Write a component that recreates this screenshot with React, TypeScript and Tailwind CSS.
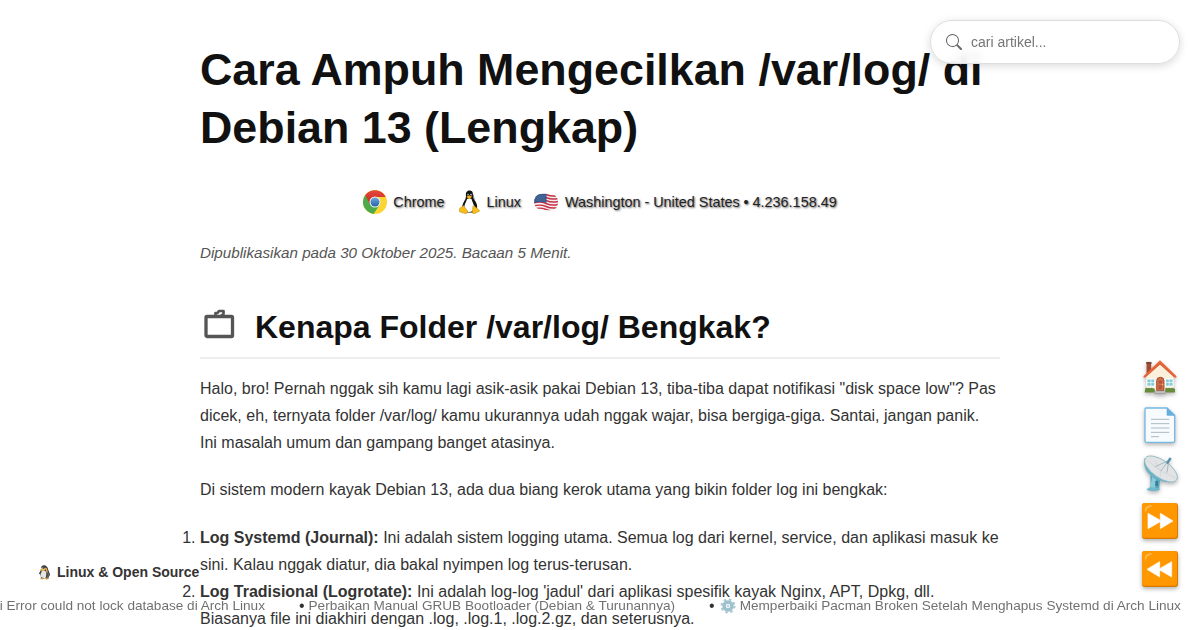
import React from "react";

function ChromeIcon() {
  return (
    <svg viewBox="0 0 48 48" className="size-6 shrink-0">
      <defs>
        <linearGradient id="cr" x2="0" y2="1"><stop stopColor="#e5483c" /><stop offset="1" stopColor="#c9281f" /></linearGradient>
        <linearGradient id="cb" x2="0" y2="1"><stop stopColor="#6fa8dc" /><stop offset="1" stopColor="#2463a8" /></linearGradient>
      </defs>
      <circle cx="24" cy="24" r="24" fill="#fcd532" />
      <path d="M24 24 4.500 10A24 24 0 0 0 21 47.800L33.500 29.500Z" fill="#4caa48" />
      <path d="M24 24 14.500 29.500 4.500 10A24 24 0 0 1 45.500 14H24Z" fill="url(#cr)" />
      <circle cx="24" cy="24" r="11" fill="#f4f4f4" />
      <circle cx="24" cy="24" r="9" fill="url(#cb)" />
    </svg>
  );
}

function TuxIcon() {
  return (
    <svg viewBox="0 0 44 50" className="h-6 w-[21px] shrink-0">
      <path d="M22 1c-6 0-8 5-7.500 10 .5 6-1 8-4 13-3 5-5 12-3 17l8 6h15l7-7c2-7-1-14-5-19-3-4-3-6-3-11C29.500 4 27 1 22 1Z" fill="#111" />
      <path d="M17 18c-1 5-6 11-6 18 0 5 5 10 10 10 6 0 10-3 11-9 0-8-5-13-6-19Z" fill="#fff" />
      <ellipse cx="19" cy="10" rx="1.500" ry="2.200" fill="#ddd" /><ellipse cx="25" cy="10" rx="1.700" ry="2.300" fill="#ddd" />
      <circle cx="19.300" cy="11" r="1.200" /><circle cx="24.500" cy="11" r="1.300" />
      <path d="m15.500 14 6-3 6 3-6 5Z" fill="#f7b718" />
      <path d="m9 32 9 12c1 4-2 6-6 5L2 46c-3-1-1-4-1-7 1-3 5-1 8-7ZM33 33c1 5 5 3 6 6l4 4c1 3-6 3-9 6-4 2-7 0-6-5 1-4 0-9 2-11Z" fill="#f8bd18" stroke="#a96e0c" strokeWidth=".8" />
      <path d="M28 7c3 4 1 8 5 13" fill="none" stroke="#555" strokeWidth="1.500" />
    </svg>
  );
}

function FlagIcon() {
  return (
    <svg viewBox="0 0 48 40" className="mt-[-1px] h-5 w-6 shrink-0">
      <defs><clipPath id="flag"><path d="M1 15Q4 4 14 4c10-1 14 0 22 1 7 0 10 5 12 11 1 7-1 13-5 17-7 5-15 4-22 3-8-1-14-1-18-7-3-5-3-9-2-14Z" /></clipPath></defs>
      <g clipPath="url(#flag)">
        <path d="M0 0h48v40H0Z" fill="#f6eff0" />
        <path d="M0 4q12-4 24 1t24 2M0 10q12-4 24 1t24 2M0 16q12-4 24 1t24 2M0 22q12-4 24 1t24 2M0 28q12-4 24 1t24 2M0 34q12-4 24 1t24 2" fill="none" stroke="#c63045" strokeWidth="2.900" />
        <path d="M0 0h25v22Q13 18 0 22Z" fill="#35588d" />
        <path d="M5 8h18M3 12h20M5 16h18" stroke="#a9bcd8" strokeWidth="1.200" strokeDasharray="1.500 2.500" />
      </g>
    </svg>
  );
}

function HomeIcon() {
  return (
    <svg viewBox="-1 -1 110 110" className="size-9">
      <path d="M13 10h14v35H13Z" fill="#a44b34" /><path d="M12 8h16v6H12Z" fill="#7c4436" />
      <path d="M12 50 54 12l41 38v45H12Z" fill="#fbf0dc" />
      <path d="M54 3 103 50c4 5 0 8-5 5L54 16 9 55c-5 3-8-1-4-5Z" fill="#e96435" /><path d="m9 55 45-40 44 40" fill="none" stroke="#b94c2d" strokeWidth="1.500" />
      <path d="M14 60h24v22H14ZM71 60h23v22H71Z" fill="#85cbd6" stroke="#fff" strokeWidth="3" /><path d="M26 60v22M14 71h24M82 60v22M71 71h23" stroke="#fff" strokeWidth="2" />
      <path d="M44 95V65q0-10 11-10t11 10v30Z" fill="#cf704d" stroke="#a8472f" strokeWidth="3" /><path d="M50 65h10v9H50ZM50 79h10v12H50Z" fill="#b55439" /><circle cx="62" cy="77" r="2" fill="#f8d052" />
      <path d="M9 89q3-3 7-1 4-3 8 0 4-3 9 0l5 2v11H7ZM70 89q3-3 8-1 4-3 8 0 5-3 10 0l4 3v10H70Z" fill="#668c3b" /><path d="M42 96h25l6 11H36Z" fill="#a5a5a5" /><path d="M40 100h29" stroke="#d3d3d3" strokeWidth="3" />
    </svg>
  );
}

function PageIcon() {
  return (
    <svg viewBox="0 0 108 108" className="size-9">
      <path d="M12 3h63l23 22v77q0 4-4 4H13q-4 0-4-4V7q0-4 3-4Z" fill="#f7fbfd" stroke="#74b9e4" strokeWidth="4" />
      <path d="M74 2v21q0 3 3 3h23Z" fill="#65afdf" />
      <path d="M27 37h55M27 50h55M27 63h55M27 76h55M27 89h24" stroke="#9cabb6" strokeWidth="2.500" />
    </svg>
  );
}

function SatelliteIcon() {
  return (
    <svg viewBox="0 0 108 108" className="size-9 overflow-visible">
      <path d="m25 61 29 14-3 29q-17 6-34 0l9-10Z" fill="#58a5bc" /><path d="m30 66 12 7-2 25H25Z" fill="#8acbd9" /><ellipse cx="34" cy="103" rx="20" ry="5" fill="#70b9cc" />
      <path d="M40 78h8v15h-8Z" fill="#327f9a" />
      <path d="M7 10Q2 35 18 54t48 26q31 5 39-8Z" fill="#6cb3c7" />
      <ellipse cx="57" cy="42" rx="57" ry="26" transform="rotate(35 57 42)" fill="#e2e3e5" stroke="#8bb8c4" strokeWidth="2.500" />
      <path d="M11 12 56 48l46 22M40 18l16 30-2 18" fill="none" stroke="#cbd0d5" strokeWidth="2" />
      <path d="m56 48 25-33M39 35l41-18-5 36" fill="none" stroke="#8faab5" strokeWidth="2.200" /><path d="m72 24 11-17 6 4-11 16Z" fill="#5590aa" />
    </svg>
  );
}

function WindIcon({ back = false }: { back?: boolean }) {
  return (
    <svg viewBox="0 0 108 108" className="size-9">
      <rect width="108" height="108" rx="9" fill="#d97900" />
      <rect width="105" height="104" rx="8" fill="#ff9800" />
      <path d="M8 23Q9 10 22 7l9 0q1 3-4 4-12 3-14 12-3 7-5 0Z" fill="#ffb84d" />
      <path d={back ? "M53 32v21l36-21v46L53 57v21L15 55Z" : "M18 31v46l37-21v21l38-23-38-23v21Z"} fill="#fff" stroke="#fff" strokeWidth="2" strokeLinejoin="round" />
    </svg>
  );
}

function PenguinIcon() {
  return (
    <svg viewBox="0 0 40 48" className="h-[15px] w-[13px] shrink-0">
      <path d="M17 1C10 2 8 8 9 14L2 28l5 2 2 12 22 1 7-12-6-16C30 5 25 0 17 1Z" fill="#424242" />
      <path d="M12 18q-6 9-3 19 6 9 15 4 5-12-1-23Z" fill="#e6e6e4" /><path d="M9 11q4-5 9-2l4 4-4 5-8-1Z" fill="#f2e7cf" />
      <path d="m5 14 9-3 6 4-8 4Z" fill="#f5b435" /><path d="m9 40 10 1-4 5-9-1ZM22 42l10-2 3 4-9 3Z" fill="#c69a48" /><path d="M22 10q7 4 6 15" fill="none" stroke="#f2b13c" strokeWidth="4" />
      <path d="M28 20q8 10 2 21" fill="none" stroke="#777" strokeWidth="3" />
      <circle cx="16" cy="10" r="2" />
    </svg>
  );
}

function GearIcon() {
  return (
    <svg viewBox="0 0 32 32" className="mr-1 size-4 shrink-0">
      <circle cx="16" cy="16" r="13" fill="none" stroke="#9fc2cd" strokeWidth="4" strokeDasharray="5 5.210" />
      <circle cx="16" cy="16" r="8" fill="#edf4f6" stroke="#94bbc8" strokeWidth="7" />
      <circle cx="16" cy="16" r="2" fill="#a9c6cf" />
    </svg>
  );
}

const floating = [HomeIcon, PageIcon, SatelliteIcon, () => <WindIcon />, () => <WindIcon back />];

export default function App() {
  return (
    <div className="relative h-[630px] w-[1200px] overflow-hidden bg-white font-['Liberation_Sans',Arial,sans-serif] text-base leading-[27.200px] text-[#333]">
      <main className="mx-auto w-[800px] pt-10">
        <h1 className="text-[44.800px] leading-[58.240px] font-bold text-[#111]">Cara Ampuh Mengecilkan /var/log/ di Debian 13 (Lengkap)</h1>
        <div className="mt-[34px] flex h-6 items-center justify-center text-[14.400px] text-[#222] [text-shadow:1px_1px_2px_rgba(0,0,0,0.6)]">
          <ChromeIcon /><span className="ml-1.5">Chrome</span>
          <span className="ml-[14px] flex"><TuxIcon /></span><span className="ml-[7px]">Linux</span>
          <span className="ml-[13px] flex"><FlagIcon /></span><span className="ml-[7px]">Washington - United States • 4.236.158.49</span>
        </div>
        <p className="mt-[25px] text-[15.200px] italic text-[#555]">Dipublikasikan pada 30 Oktober 2025. Bacaan 5 Menit.</p>
        <h2 className="mt-9 flex h-[56px] items-center border-b-2 border-[#eee] pb-[4px] text-[32px] font-bold text-[#111]">
          <svg viewBox="0 0 32 32" className="mt-[-8px] mr-[19px] ml-[3px] h-8 w-[33px] overflow-visible" fill="none" stroke="#555" strokeWidth="3.300" strokeLinejoin="round">
            <rect x="2.500" y="8.500" width="26.500" height="20" rx="1" /><path d="M12 9V5h2l1.500-2H20v3l-4 3" strokeWidth="2.700" />
          </svg>
          Kenapa Folder /var/log/ Bengkak?
        </h2>
        <p className="mt-4">Halo, bro! Pernah nggak sih kamu lagi asik-asik pakai Debian 13, tiba-tiba dapat notifikasi "disk space low"? Pas dicek, eh, ternyata folder /var/log/ kamu ukurannya udah nggak wajar, bisa bergiga-giga. Santai, jangan panik. Ini masalah umum dan gampang banget atasinya.</p>
        <p className="mt-5">Di sistem modern kayak Debian 13, ada dua biang kerok utama yang bikin folder log ini bengkak:</p>
        <ol className="mt-[20.200px] list-decimal">
          <li><strong>Log Systemd (Journal):</strong> Ini adalah sistem logging utama. Semua log dari kernel, service, dan aplikasi masuk ke sini. Kalau nggak diatur, dia bakal nyimpen log terus-terusan.</li>
          <li><strong>Log Tradisional (Logrotate):</strong> Ini adalah log-log 'jadul' dari aplikasi spesifik kayak Nginx, APT, Dpkg, dll. Biasanya file ini diakhiri dengan .log, .log.1, .log.2.gz, dan seterusnya.</li>
        </ol>
      </main>

      <label className="absolute top-5 right-5 flex h-11 w-[250px] items-center rounded-full border border-[#ddd] bg-white/90 pl-[15px] shadow-[0_2px_8px_rgba(0,0,0,0.15)] backdrop-blur-[5px]">
        <svg viewBox="0 0 16 16" className="size-4 shrink-0" fill="#666"><path d="M11.742 10.344a6.500 6.500 0 1 0-1.397 1.398h-.001q.044.060.098.115l3.850 3.850a1 1 0 0 0 1.415-1.414l-3.850-3.850a1 1 0 0 0-.115-.1zM12 6.500a5.500 5.500 0 1 1-11 0 5.500 5.500 0 0 1 11 0" /></svg>
        <input className="mt-px ml-[9px] w-[190px] bg-transparent text-[14px] outline-none placeholder:text-[#757575]" placeholder="cari artikel..." />
      </label>

      <nav className="absolute top-[359px] right-[22px] flex flex-col gap-3">
        {floating.map((Icon, i) => <a key={i} className="drop-shadow-[0_2px_2px_rgba(0,0,0,0.3)]"><Icon /></a>)}
      </nav>

      <div className="absolute top-[559px] left-[38px] flex items-center gap-[6px] text-[14px] font-bold whitespace-nowrap"><PenguinIcon />Linux &amp; Open Source</div>
      <div className="absolute top-[592px] right-[19px] flex items-center text-[13.600px] whitespace-nowrap text-[#333] will-change-transform">
        <span className="mr-[34px] opacity-70">Mengatasi Error could not lock database di Arch Linux</span>
        <span className="mr-[4px] text-base leading-[27.200px]">•</span><span className="mr-[34px] opacity-70">Perbaikan Manual GRUB Bootloader (Debian &amp; Turunannya)</span>
        <span className="mr-[5px] text-base leading-[27.200px]">•</span><span className="flex opacity-90"><GearIcon /></span>
        <span className="opacity-70">Memperbaiki Pacman Broken Setelah Menghapus Systemd di Arch Linux</span>
      </div>
    </div>
  );
}
